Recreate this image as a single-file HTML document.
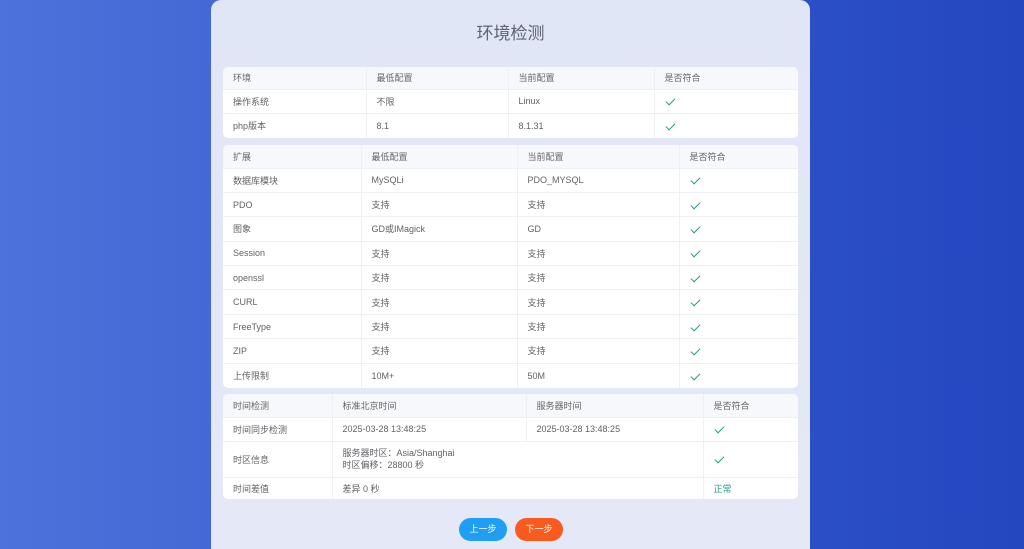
<!DOCTYPE html><html><head><meta charset="utf-8"><style>
*{margin:0;padding:0;box-sizing:border-box}
html,body{width:1024px;height:549px;overflow:hidden}
body{background:linear-gradient(90deg,#4d72da,#3257cc 60%,#2446c0);font-family:"Liberation Sans","Noto Sans CJK SC",sans-serif;position:relative}
.card{position:absolute;left:211px;top:0;width:599px;height:549px;background:linear-gradient(180deg,#e1e6f6,#e4e8f7);border-radius:10px 10px 0 0}
h1{position:absolute;left:0;right:0;top:19px;text-align:center;font-size:17px;font-weight:normal;color:#5f6470}
table{position:absolute;left:12px;width:575px;border-collapse:collapse;background:#fff;border-radius:5px;overflow:hidden;font-size:9px;color:#606266;table-layout:fixed}
td{padding-left:10px;border-right:1px solid #eef0f4;border-bottom:1px solid #eef0f4;vertical-align:middle}
td:last-child{border-right:none}
tr:last-child td{border-bottom:none}
tr.h td{background:#f7f8fb;color:#666}
.ck{display:inline-block;width:9px;height:5px;border-left:1.3px solid #1f9c8a;border-bottom:1.3px solid #1f9c8a;transform:rotate(-45deg);margin-left:1px;vertical-align:middle;position:relative;top:-1px}
.ok{color:#1f9c8a}
.btn{position:absolute;top:518px;width:48px;height:23px;border-radius:12px;color:#fff;font-size:9px;text-align:center;line-height:23px}
</style></head><body>
<div class="card">
<h1>环境检测</h1>
<table style="top:67px">
<col style="width:143px"><col style="width:142px"><col style="width:146px"><col>
<tr class="h" style="height:22px"><td>环境</td><td>最低配置</td><td>当前配置</td><td>是否符合</td></tr>
<tr style="height:24px"><td>操作系统</td><td>不限</td><td>Linux</td><td><span class="ck"></span></td></tr>
<tr style="height:25px"><td>php版本</td><td>8.1</td><td>8.1.31</td><td><span class="ck"></span></td></tr>
</table>
<table style="top:145px">
<col style="width:138px"><col style="width:156px"><col style="width:162px"><col>
<tr class="h" style="height:23px"><td>扩展</td><td>最低配置</td><td>当前配置</td><td>是否符合</td></tr>
<tr style="height:24.4px"><td>数据库模块</td><td>MySQLi</td><td>PDO_MYSQL</td><td><span class="ck"></span></td></tr>
<tr style="height:24.4px"><td>PDO</td><td>支持</td><td>支持</td><td><span class="ck"></span></td></tr>
<tr style="height:24.4px"><td>图象</td><td>GD或IMagick</td><td>GD</td><td><span class="ck"></span></td></tr>
<tr style="height:24.4px"><td>Session</td><td>支持</td><td>支持</td><td><span class="ck"></span></td></tr>
<tr style="height:24.4px"><td>openssl</td><td>支持</td><td>支持</td><td><span class="ck"></span></td></tr>
<tr style="height:24.4px"><td>CURL</td><td>支持</td><td>支持</td><td><span class="ck"></span></td></tr>
<tr style="height:24.4px"><td>FreeType</td><td>支持</td><td>支持</td><td><span class="ck"></span></td></tr>
<tr style="height:24.4px"><td>ZIP</td><td>支持</td><td>支持</td><td><span class="ck"></span></td></tr>
<tr style="height:24.4px"><td>上传限制</td><td>10M+</td><td>50M</td><td><span class="ck"></span></td></tr>
</table>
<table style="top:394px">
<col style="width:109px"><col style="width:194px"><col style="width:177px"><col>
<tr class="h" style="height:23px"><td>时间检测</td><td>标准北京时间</td><td>服务器时间</td><td>是否符合</td></tr>
<tr style="height:24px"><td>时间同步检测</td><td>2025-03-28 13:48:25</td><td>2025-03-28 13:48:25</td><td><span class="ck"></span></td></tr>
<tr style="height:36px"><td>时区信息</td><td colspan="2" style="line-height:12px">服务器时区：Asia/Shanghai<br>时区偏移：28800 秒</td><td><span class="ck"></span></td></tr>
<tr style="height:22px"><td>时间差值</td><td colspan="2">差异 0 秒</td><td class="ok">正常</td></tr>
</table>
<div class="btn" style="left:248px;background:#1e9ef5">上一步</div>
<div class="btn" style="left:304px;background:#fa5a1e">下一步</div>
</div>
</body></html>
